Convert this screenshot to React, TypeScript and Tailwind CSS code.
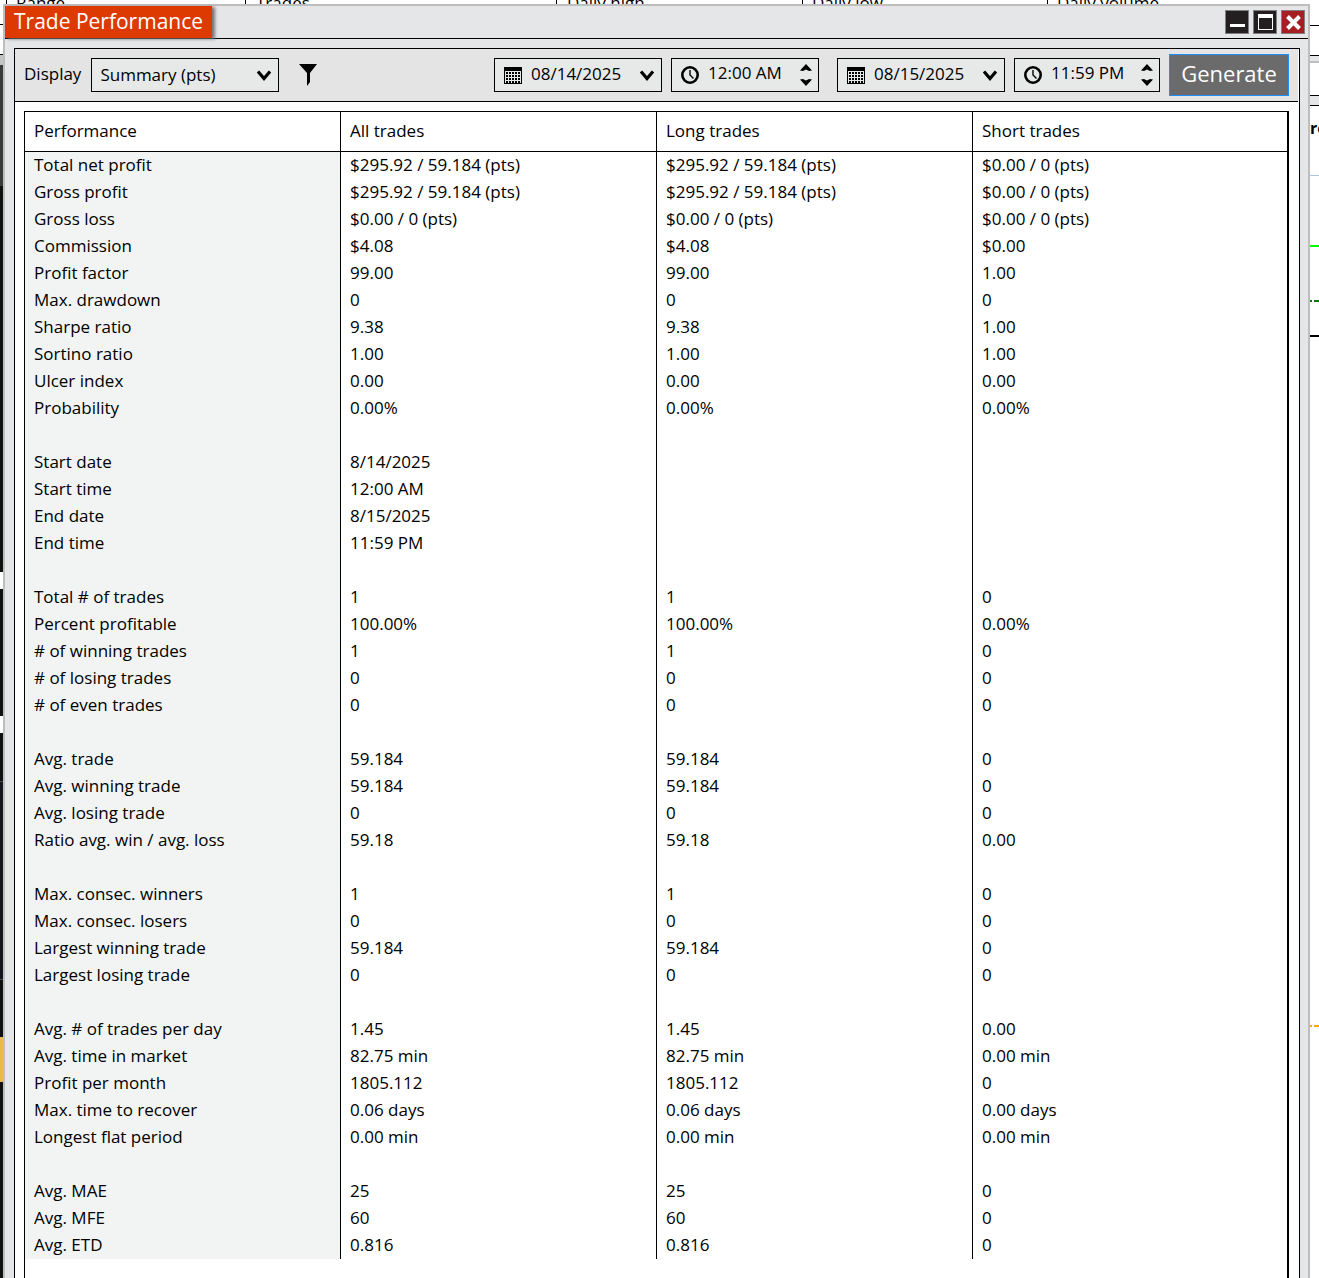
import { useState } from 'react';

const FONT = "font-['Open_Sans','Noto_Sans',sans-serif]";

type Row = [string, string, string, string];

const same = (label: string, value: string, short: string): Row => [label, value, value, short];
const BLANK: Row = ['', '', '', ''];

const ROWS: Row[] = [
  same('Total net profit', '$295.92 / 59.184 (pts)', '$0.00 / 0 (pts)'),
  same('Gross profit', '$295.92 / 59.184 (pts)', '$0.00 / 0 (pts)'),
  same('Gross loss', '$0.00 / 0 (pts)', '$0.00 / 0 (pts)'),
  same('Commission', '$4.08', '$0.00'),
  same('Profit factor', '99.00', '1.00'),
  same('Max. drawdown', '0', '0'),
  same('Sharpe ratio', '9.38', '1.00'),
  same('Sortino ratio', '1.00', '1.00'),
  same('Ulcer index', '0.00', '0.00'),
  same('Probability', '0.00%', '0.00%'),
  BLANK,
  ['Start date', '8/14/2025', '', ''],
  ['Start time', '12:00 AM', '', ''],
  ['End date', '8/15/2025', '', ''],
  ['End time', '11:59 PM', '', ''],
  BLANK,
  same('Total # of trades', '1', '0'),
  same('Percent profitable', '100.00%', '0.00%'),
  same('# of winning trades', '1', '0'),
  same('# of losing trades', '0', '0'),
  same('# of even trades', '0', '0'),
  BLANK,
  same('Avg. trade', '59.184', '0'),
  same('Avg. winning trade', '59.184', '0'),
  same('Avg. losing trade', '0', '0'),
  same('Ratio avg. win / avg. loss', '59.18', '0.00'),
  BLANK,
  same('Max. consec. winners', '1', '0'),
  same('Max. consec. losers', '0', '0'),
  same('Largest winning trade', '59.184', '0'),
  same('Largest losing trade', '0', '0'),
  BLANK,
  same('Avg. # of trades per day', '1.45', '0.00'),
  same('Avg. time in market', '82.75 min', '0.00 min'),
  same('Profit per month', '1805.112', '0'),
  same('Max. time to recover', '0.06 days', '0.00 days'),
  same('Longest flat period', '0.00 min', '0.00 min'),
  BLANK,
  same('Avg. MAE', '25', '0'),
  same('Avg. MFE', '60', '0'),
  same('Avg. ETD', '0.816', '0'),
];

function ChevronDown() {
  return (
    <svg width="14" height="11" viewBox="0 0 14 11" className="shrink-0" aria-hidden="true">
      <path d="M1 1.500 7 8.500 13 1.500" fill="none" stroke="#000" strokeWidth="3.200" />
    </svg>
  );
}

function CalendarIcon() {
  return (
    <svg width="18" height="17" viewBox="0 0 18 17" className="shrink-0" aria-hidden="true">
      <path d="M0 0h18v17H0z" />
      <path d="M1 4h16v12H1z" fill="#e7e9e9" />
      {[5, 8, 11, 14].map(y =>
        [3, 6, 9, 12, 15].map(x => <rect key={`${x}-${y}`} x={x - 1} y={y} width="2" height="2" />)
      )}
    </svg>
  );
}

function ClockIcon() {
  return (
    <svg width="18" height="18" viewBox="0 0 18 18" className="shrink-0" aria-hidden="true">
      <circle cx="9" cy="9" r="7.700" fill="none" stroke="#000" strokeWidth="2.600" />
      <path d="M9 4v5l3.500 3.500" fill="none" stroke="#000" strokeWidth="1.400" />
    </svg>
  );
}

function DateField({ label, initial }: { label: string; initial: string }) {
  const [value, setValue] = useState(initial);
  return (
    <div className="flex h-[34px] w-[168px] items-center border border-black bg-[#e7e9e9] pr-[7px] pl-[9px]">
      <CalendarIcon />
      <input
        aria-label={label}
        value={value}
        onChange={e => setValue(e.target.value)}
        className="ml-[9px] h-6 w-0 grow bg-transparent pb-[2px] text-[17px] leading-6 outline-none"
      />
      <button aria-label={`Open ${label} calendar`}>
        <ChevronDown />
      </button>
    </div>
  );
}

function TimeField({ label, initial, width }: { label: string; initial: string; width: string }) {
  const [value, setValue] = useState(initial);
  return (
    <div className={`flex h-[34px] items-center border border-black bg-[#e7e9e9] pr-[6px] pl-[9px] ${width}`}>
      <ClockIcon />
      <input
        aria-label={label}
        value={value}
        onChange={e => setValue(e.target.value)}
        className="ml-[9px] h-6 w-0 grow bg-transparent pb-1 text-[17px] leading-6 outline-none"
      />
      <div className="flex flex-col gap-2 pb-px">
        <button aria-label={`${label} up`}>
          <svg width="12" height="7" viewBox="0 0 12 7" className="block">
            <path d="M0 6.500 6 0l6 6.500-3 .500-3-1.500L3 7z" />
          </svg>
        </button>
        <button aria-label={`${label} down`}>
          <svg width="12" height="7" viewBox="0 0 12 7" className="block">
            <path d="M0 .500 6 7l6-6.500L9 0 6 1.500 3 0z" />
          </svg>
        </button>
      </div>
    </div>
  );
}

function TitleBar() {
  return (
    <div className="flex h-[33px] items-stretch justify-between border-b border-black">
      <h1 className="relative bg-[#dc3a00] px-[9px] pt-px text-[21px] leading-7 text-white shadow-[3px_1px_3px_#777]">
        Trade Performance
      </h1>
      <div className="flex items-center gap-1 pr-[3px] pb-px">
        <button aria-label="Minimize" className="flex size-6 items-center justify-center border border-[#808080] bg-[#231f20]">
          <svg width="22" height="22" viewBox="0 0 22 22">
            <path d="M4 13h15v3H4z" fill="#fff" />
          </svg>
        </button>
        <button aria-label="Maximize" className="flex size-6 items-center justify-center border border-[#808080] bg-[#231f20]">
          <svg width="22" height="22" viewBox="0 0 22 22">
            <path d="M4 3h15v16H4zM5 7h13v11H5z" fill="#fff" fillRule="evenodd" />
          </svg>
        </button>
        <button aria-label="Close" className="flex size-6 items-center justify-center border border-[#808080] bg-[#a61e22]">
          <svg width="22" height="22" viewBox="0 0 22 22">
            <path d="m5.500 5.500 12 12m0-12-12 12" stroke="#fff" strokeWidth="4" />
          </svg>
        </button>
      </div>
    </div>
  );
}

function Toolbar() {
  return (
    <div className="mr-px flex h-[53px] items-center border-b border-black bg-[#e4e4e4] px-[9px]">
      <label htmlFor="display" className="pb-[2px] text-[17px] leading-6">
        Display
      </label>
      <div className="relative ml-[10px]">
        <select
          id="display"
          className="block h-[34px] w-[188px] appearance-none border border-black bg-[#e7e9e9] pl-2 text-[17px] leading-6"
        >
          <option>Summary (pts)</option>
        </select>
        <span className="pointer-events-none absolute inset-y-0 right-2 flex items-center">
          <ChevronDown />
        </span>
      </div>
      <button aria-label="Filter" className="ml-5">
        <svg width="18" height="22" viewBox="0 0 18 22" className="block">
          <path d="M0 0h18l-7 9v9l-3 4V9z" />
        </svg>
      </button>
      <div className="ml-auto flex items-center gap-[9px]">
        <DateField label="Start date" initial="08/14/2025" />
        <TimeField label="Start time" initial="12:00 AM" width="w-[148px]" />
        <div className="ml-[9px] flex items-center gap-[9px]">
          <DateField label="End date" initial="08/15/2025" />
          <TimeField label="End time" initial="11:59 PM" width="w-[146px]" />
        </div>
        <button className="h-[42px] w-[120px] border border-[#1e90ff] bg-[#6b6b6b] pb-1 text-[22px] leading-8 text-white">
          Generate
        </button>
      </div>
    </div>
  );
}

function PerformanceTable() {
  return (
    <table className="w-full table-fixed border-separate border-spacing-0 text-left text-[17px] leading-[25px]">
      <thead>
        <tr>
          {['Performance', 'All trades', 'Long trades', 'Short trades'].map(name => (
            <th
              key={name}
              scope="col"
              className="h-10 border-r border-b border-black pt-0 pb-[2px] pl-[9px] font-normal last:border-r-2"
            >
              {name}
            </th>
          ))}
        </tr>
      </thead>
      <tbody>
        {ROWS.map(([label, ...values], i) => (
          <tr key={i}>
            <th scope="row" className="h-[27px] border-r border-black bg-[#f1f4f3] pt-0 pb-[2px] pl-[9px] font-normal">
              {label}
            </th>
            {values.map((value, j) => (
              <td key={j} className="border-r border-black pt-0 pb-[2px] pl-[9px] last:border-r-2">
                {value}
              </td>
            ))}
          </tr>
        ))}
      </tbody>
    </table>
  );
}

// Short piece of a dash-dot price line
function PriceLine({ color }: { color: string }) {
  return (
    <div className="flex h-[2px] gap-[2px]">
      <span className={`w-[2px] ${color}`} />
      <span className={`grow ${color}`} />
    </div>
  );
}

export default function App() {
  return (
    <div className={`flex min-h-screen flex-col bg-white text-black ${FONT}`}>
      {/* Bottom edge of the grid header behind the window */}
      <div className="flex h-1 overflow-hidden pl-[6px] text-[17px] leading-[6px]">
        <span className="w-[239px] border-l border-black pl-[9px]">Range</span>
        <span className="w-[311px] border-l border-black pl-[10px]">Trades</span>
        <span className="w-[246px] border-l border-black pl-[10px]">Daily high</span>
        <span className="w-[245px] border-l border-black pl-[9px]">Daily low</span>
        <span className="border-l border-black pl-[9px]">Daily volume</span>
      </div>
      <div className="flex grow">
        <div className="flex w-[3px] shrink-0 flex-col bg-[#101010]">
          <div className="h-[21px] border-b border-black bg-white" />
          <div className="h-[30px] border-b border-black bg-white" />
          <div className="h-[10px] bg-[#c4c4c4]" />
          <div className="h-[121px] bg-[#3a3a3a]" />
          <div className="h-[386px]" />
          <div className="h-[17px] bg-white" />
          <div className="h-[127px]" />
          <div className="h-[17px] bg-white" />
          <div className="h-[48px]" />
          <div className="h-[199px] border-y border-[#4a4a50] bg-[#17161d]" />
          <div className="h-[57px]" />
          <div className="h-[45px] bg-[#e9b94f]" />
        </div>

        <div className="flex min-w-0 grow flex-col border-x-2 border-t-2 border-[#bebebe] bg-[#e5e6e8]">
          <TitleBar />
          <div className="mt-[9px] mr-[8px] ml-[9px] flex grow flex-col border-x border-t border-black bg-white">
            <Toolbar />
            <div className="mt-[9px] mr-[10px] ml-[9px] flex grow flex-col border-t border-r-2 border-l border-black">
              {/* last column runs under the frame's right edge */}
              <div className="-mr-[2px]">
                <PerformanceTable />
              </div>
            </div>
          </div>
        </div>

        <div className="flex w-[9px] shrink-0 flex-col overflow-hidden">
          <div className="h-[22px] border-b border-black" />
          <div className="h-[30px] border-b border-black" />
          <div className="h-[7px] border-b-2 border-[#bebebe] bg-[#e5e6e8]" />
          <div className="h-[33px] border-b border-black" />
          <div className="h-[10px] border-b border-black bg-[#e5e6e8]" />
          <div className="h-[70px] border-b border-[#b0c4de] pt-[10px] text-[16px] leading-6 font-bold">re</div>
          <div className="h-[71px] border-b-2 border-[#00ff00]" />
          <div className="h-[53px]" />
          <PriceLine color="bg-[#008000]" />
          <div className="h-[35px] border-b-2 border-black" />
          <div className="h-[688px]" />
          <PriceLine color="bg-[#ffa500]" />
        </div>
      </div>
    </div>
  );
}
